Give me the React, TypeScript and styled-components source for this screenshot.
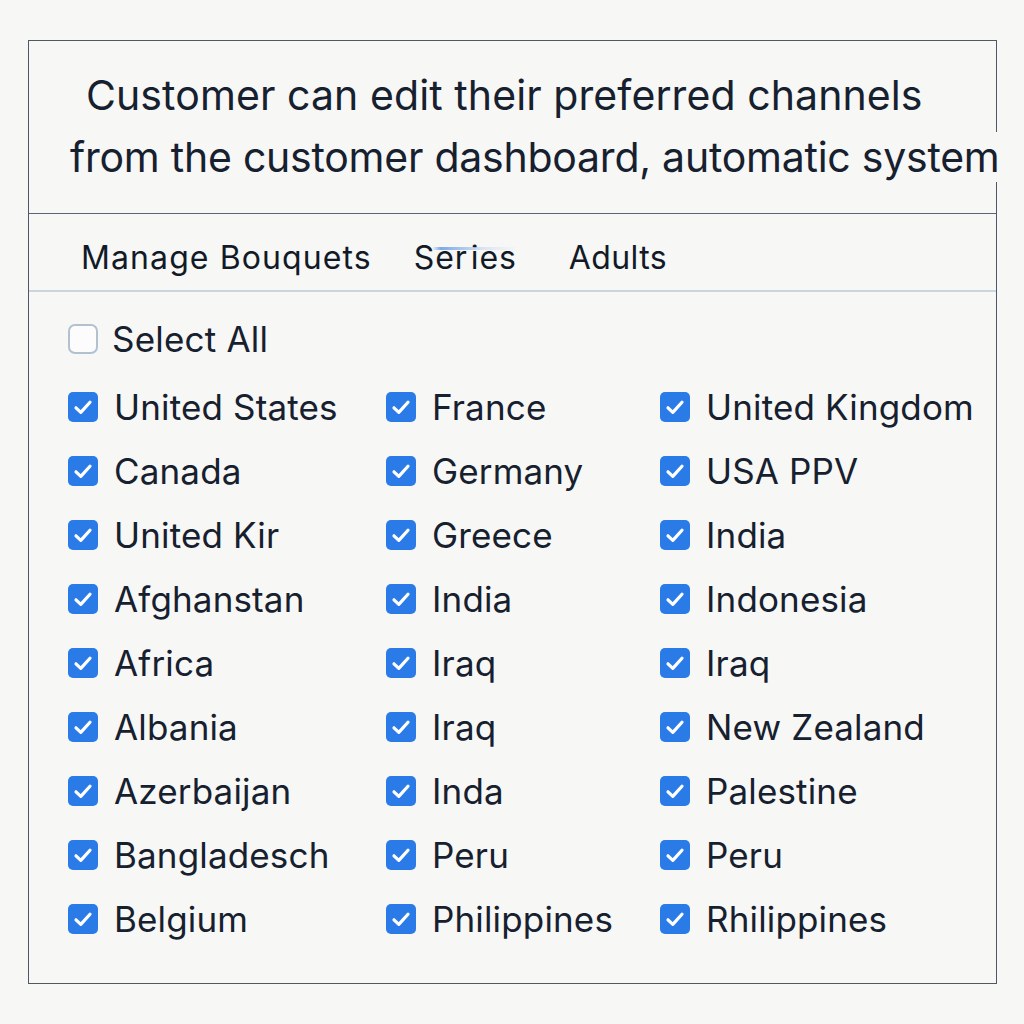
import React from "react";
import styled, { createGlobalStyle } from "styled-components";

const Global = createGlobalStyle`
  html, body { margin: 0; padding: 0; background: #f7f7f6; }
  body { font-family: Inter, "Noto Sans", sans-serif; color: #16202e; }
`;

const Page = styled.div`
  padding: 40px 0 0 28px;
  width: 1024px;
  height: 1024px;
  box-sizing: border-box;
`;

const Card = styled.div`
  width: 969px;
  height: 944px;
  box-sizing: border-box;
  border: 1px solid #4e586a;
  display: flex;
  flex-direction: column;
`;

const Header = styled.div`
  padding: 23px 0 25px 41px;
  border-bottom: 1px solid #5a6476;
  font-size: 41px;
  line-height: 62px;
  white-space: nowrap;
`;

const HeaderLine = styled.div<{ $indent: number; $spacing: number }>`
  padding-left: ${(p) => p.$indent}px;
  letter-spacing: ${(p) => p.$spacing}px;
  & > span {
    background: #f7f7f6;
    position: relative;
  }
`;

const Tabs = styled.div`
  display: flex;
  align-items: flex-end;
  height: 78px;
  box-sizing: border-box;
  padding: 0 0 13px 52px;
  border-bottom: 2px solid #c9d6df;
  font-size: 32px;
`;

const Tab = styled.div<{ $offset: number; $spacing: number }>`
  position: relative;
  margin-left: ${(p) => p.$offset}px;
  color: #121a27;
  letter-spacing: ${(p) => p.$spacing}px;
`;

const Split = styled.span`
  margin-left: 3px;
`;

const TabMark = styled.span`
  position: absolute;
  left: 18px;
  top: 9px;
  width: 86px;
  height: 3px;
  border-radius: 2px;
  background: linear-gradient(
    90deg,
    transparent,
    #7eaae4 10%,
    #a9c6ee 35%,
    rgba(200, 218, 240, 0.6) 60%,
    transparent
  );
`;

const Body = styled.div`
  padding: 32px 0 0 39px;
  font-size: 35px;
`;

const SelectRow = styled.label`
  display: flex;
  align-items: center;
  gap: 14px;
  height: 30px;
  margin-bottom: 36px;
  color: #16202e;
  letter-spacing: 0.2px;
`;

const Grid = styled.div`
  display: grid;
  grid-template-columns: 318px 274px 1fr;
  grid-auto-rows: 64px;
`;

const Item = styled.div`
  display: flex;
  align-items: center;
  gap: 16px;
  height: 30px;
  margin-top: 2px;
  white-space: nowrap;
  letter-spacing: 0.15px;
`;

const Box = styled.span<{ $checked: boolean }>`
  flex: none;
  width: 30px;
  height: 30px;
  box-sizing: border-box;
  border-radius: ${(p) => (p.$checked ? "5px" : "7px")};
  display: inline-flex;
  align-items: center;
  justify-content: center;
  background: ${(p) => (p.$checked ? "#2a7be7" : "#fcfcfc")};
  border: ${(p) => (p.$checked ? "none" : "2px solid #b1c1d2")};
`;

const Check = ({ checked }: { checked: boolean }) => (
  <Box $checked={checked}>
    {checked && (
      <svg width="30" height="30" viewBox="0 0 30 30">
        <path
          d="M8 15.8 L12.8 20.4 L22 10.2"
          fill="none"
          stroke="#fff"
          strokeWidth="3.2"
          strokeLinecap="round"
          strokeLinejoin="round"
        />
      </svg>
    )}
  </Box>
);

const rows: string[][] = [
  ["United States", "France", "United Kingdom"],
  ["Canada", "Germany", "USA PPV"],
  ["United Kir", "Greece", "India"],
  ["Afghanstan", "India", "Indonesia"],
  ["Africa", "Iraq", "Iraq"],
  ["Albania", "Iraq", "New Zealand"],
  ["Azerbaijan", "Inda", "Palestine"],
  ["Bangladesch", "Peru", "Peru"],
  ["Belgium", "Philippines", "Rhilippines"],
];

export default function App() {
  return (
    <>
      <Global />
      <Page>
        <Card>
          <Header>
            <HeaderLine $indent={16} $spacing={0.09}>
              <span>Customer can edit their preferred channels</span>
            </HeaderLine>
            <HeaderLine $indent={0} $spacing={-0.24}>
              <span>from the customer dashboard, automatic system</span>
            </HeaderLine>
          </Header>
          <Tabs>
            <Tab $offset={0} $spacing={1.1}>
              Manage Bouquets
            </Tab>
            <Tab $offset={42} $spacing={0.9}>
              Ser<Split>ies</Split>
              <TabMark />
            </Tab>
            <Tab $offset={52} $spacing={0.4}>
              Adults
            </Tab>
          </Tabs>
          <Body>
            <SelectRow>
              <Check checked={false} />
              Select All
            </SelectRow>
            <Grid>
              {rows.flat().map((name, i) => (
                <Item key={i}>
                  <Check checked={true} />
                  {name}
                </Item>
              ))}
            </Grid>
          </Body>
        </Card>
      </Page>
    </>
  );
}
